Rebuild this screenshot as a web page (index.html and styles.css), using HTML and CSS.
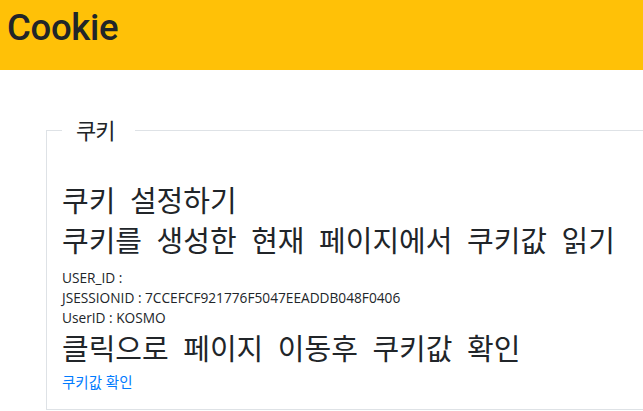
FILE: index.html
```html
<!DOCTYPE html>
<html lang="ko">
<head>
    <meta charset="UTF-8">
    <meta name="viewport" content="width=device-width, initial-scale=1.0">
    <title>Cookie</title>
    <link rel="stylesheet" href="styles.css">
</head>
<body>
    <div class="header">
        <h1>Cookie</h1>
    </div>

    <div class="content">
        <fieldset class="cookie-box">
            <legend>쿠키</legend>
            <h3>쿠키 설정하기</h3>
            <h3>쿠키를 생성한 현재 페이지에서 쿠키값 읽기</h3>
            <div class="cookie-list">
                <div>USER_ID : </div>
                <div>JSESSIONID : 7CCEFCF921776F5047EEADDB048F0406</div>
                <div>UserID : KOSMO</div>
            </div>
            <h3>클릭으로 페이지 이동후 쿠키값 확인</h3>
            <a href="#" class="check-link">쿠키값 확인</a>
        </fieldset>
    </div>
</body>
</html>
```

FILE: styles.css
```css
html, body {
    overflow: hidden;
}
body {
    margin: 0;
    font-family: "Open Sans", "Noto Sans CJK KR", sans-serif;
    color: #212529;
    background-color: #fff;
}
.header {
    background-color: #ffc107;
    height: 70px;
    padding: 0 7px;
    box-sizing: border-box;
}
.header h1 {
    margin: 0;
    padding-top: 6px;
    font-family: Roboto, sans-serif;
    font-size: 36.5px;
    font-weight: 500;
    line-height: 44px;
    letter-spacing: -0.3px;
}
.content {
    padding: 46px 0 0 46px;
    width: 760px;
}
.cookie-box {
    margin: 0;
    border: 1px solid #dee2e6;
    padding: 40px 15px 16px 15px;
}
.cookie-box legend {
    padding: 0 21px 0 14px;
    font-size: 22px;
    line-height: 28px;
    letter-spacing: -1px;
}
.cookie-box h3 {
    margin: 0 0 6px 0;
    font-size: 29px;
    font-weight: 400;
    line-height: 34px;
    word-spacing: 7px;
}
.cookie-list {
    margin: 10px 0 4px 0;
    font-size: 13.7px;
    line-height: 20px;
}
.check-link {
    display: block;
    margin-top: 7px;
    font-size: 14.5px;
    line-height: 20px;
    color: #007bff;
    text-decoration: none;
}
```
